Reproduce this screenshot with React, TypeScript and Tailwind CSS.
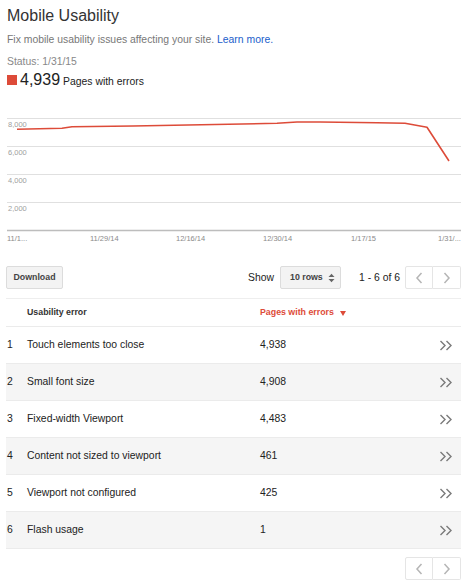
import React from "react";

const rows = [
  { n: 1, name: "Touch elements too close", count: "4,938" },
  { n: 2, name: "Small font size", count: "4,908" },
  { n: 3, name: "Fixed-width Viewport", count: "4,483" },
  { n: 4, name: "Content not sized to viewport", count: "461" },
  { n: 5, name: "Viewport not configured", count: "425" },
  { n: 6, name: "Flash usage", count: "1" },
];

function ChevLeft() {
  return (
    <svg width="8" height="12" viewBox="0 0 8 12">
      <path d="M6.5 1 L2 6 L6.5 11" fill="none" stroke="#b5b5b5" strokeWidth="1.5" />
    </svg>
  );
}
function ChevRight() {
  return (
    <svg width="8" height="12" viewBox="0 0 8 12">
      <path d="M1.5 1 L6 6 L1.5 11" fill="none" stroke="#b5b5b5" strokeWidth="1.5" />
    </svg>
  );
}

function Pager() {
  return (
    <div className="flex h-[23px]">
      <div className="w-[28px] h-full border border-[#e5e5e5] rounded-l-[2px] bg-white flex items-center justify-center">
        <ChevLeft />
      </div>
      <div className="w-[28px] h-full border border-l-0 border-[#e5e5e5] rounded-r-[2px] bg-white flex items-center justify-center">
        <ChevRight />
      </div>
    </div>
  );
}

function DoubleChev() {
  return (
    <svg width="14" height="11" viewBox="0 0 14 11">
      <path d="M1.5 1 L6 5.5 L1.5 10" fill="none" stroke="#7a7a7a" strokeWidth="1.4" />
      <path d="M7.5 1 L12 5.5 L7.5 10" fill="none" stroke="#7a7a7a" strokeWidth="1.4" />
    </svg>
  );
}

function Chart() {
  const pts: [number, number][] = [
    [17, 19.3], [62, 18.3], [72, 16.7], [133, 16], [277, 13.3], [297, 12], [320, 12],
    [377, 12.7], [405, 13.3], [427, 17.3], [449, 51],
  ];
  const d = pts.map((p, i) => (i === 0 ? "M" : "L") + p[0] + " " + p[1]).join(" ");
  const grid = [8, 36, 64, 92];
  const ylabels = ["8,000", "6,000", "4,000", "2,000"];
  const xlabels: [number, string][] = [
    [7, "11/1..."], [90, "11/29/14"], [176, "12/16/14"], [263, "12/30/14"], [351, "1/17/15"], [438, "1/31/..."],
  ];
  return (
    <svg width="471" height="135" viewBox="0 0 471 135" className="block">
      {grid.map((y, i) => (
        <g key={y}>
          <line x1="7" x2="461" y1={y + 0.5} y2={y + 0.5} stroke="#e0e0e0" strokeWidth="1" />
          <text x="8" y={y + 9} fontSize="7.5" fill="#a0a0a0" fontFamily="'Liberation Sans', Arial, sans-serif">
            {ylabels[i]}
          </text>
        </g>
      ))}
      <line x1="7" x2="461" y1="120.5" y2="120.5" stroke="#bdbdbd" strokeWidth="1.5" />
      {xlabels.map(([x, t]) => (
        <text key={t} x={x} y="131" fontSize="7.5" fill="#8a8a8a" fontFamily="'Liberation Sans', Arial, sans-serif">
          {t}
        </text>
      ))}
      <path d={d} fill="none" stroke="#dd4b39" strokeWidth="1.6" strokeLinejoin="round" />
    </svg>
  );
}

export default function App() {
  return (
    <div className="w-[471px] h-[585px] bg-white overflow-hidden font-['Liberation_Sans',Arial,sans-serif] text-[#222]">
      <div className="pl-[7px] pr-[10px]">
        <div className="pt-[6px] text-[16px] leading-[20px] text-[#333]">Mobile Usability</div>
        <div className="mt-[7px] text-[10.4px] leading-[13px] text-[#777]">
          Fix mobile usability issues affecting your site.{" "}
          <span className="text-[#1a5ecb]">Learn more.</span>
        </div>
        <div className="mt-[9px] text-[10.4px] leading-[13px] text-[#888]">Status: 1/31/15</div>
        <div className="mt-[2px] flex items-baseline h-[20px]">
          <div className="w-[10px] h-[10px] bg-[#dd4b39] self-end mb-[5px]" />
          <span className="ml-[3px] text-[16px] leading-[20px] text-[#222]">4,939</span>
          <span className="ml-[3px] text-[10.4px] leading-[13px] text-[#222]">Pages with errors</span>
        </div>
      </div>
      <div className="mt-[20px]">
        <Chart />
      </div>
      <div className="pl-[6px] pr-[10px]">
        <div className="mt-[21px] flex items-center h-[23px]">
          <div className="h-[23px] w-[57px] border border-[#dcdcdc] bg-[#f3f3f3] rounded-[2px] flex items-center justify-center text-[8.8px] font-bold text-[#444]">
            Download
          </div>
          <div className="flex-1" />
          <span className="text-[10.4px] text-[#222]">Show</span>
          <div className="ml-[6px] h-[23px] w-[61px] border border-[#dcdcdc] bg-[#f3f3f3] rounded-[2px] flex items-center justify-between pl-[9px] pr-[5px] text-[8.8px] font-bold text-[#444] whitespace-nowrap">
            <span>10 rows</span>
            <svg width="7" height="10" viewBox="0 0 7 10" className="shrink-0">
              <path d="M0.5 4 L3.5 0.8 L6.5 4 Z" fill="#666" />
              <path d="M0.5 6 L3.5 9.2 L6.5 6 Z" fill="#666" />
            </svg>
          </div>
          <span className="ml-[18px] text-[10.4px] text-[#222] whitespace-nowrap">1 - 6 of 6</span>
          <div className="ml-[5px]">
            <Pager />
          </div>
        </div>
        <div className="mt-[9px] border-t border-[#eeeeee]" />
        <div className="flex items-center h-[28px] border-b border-[#ebebeb] text-[8.8px] font-bold">
          <div className="w-[21px]" />
          <div className="w-[233px] text-[#333]">Usability error</div>
          <div className="text-[#dd4b39] flex items-center">
            Pages with errors
            <svg width="6" height="5" viewBox="0 0 6 5" className="ml-[6px] mt-[2px]">
              <path d="M0 0 L6 0 L3 5 Z" fill="#dd4b39" />
            </svg>
          </div>
        </div>
        {rows.map((r, i) => (
          <div
            key={r.n}
            className={
              "flex items-center h-[37px] border-b border-[#ebebeb] text-[10.4px] text-[#222] " +
              (i % 2 === 1 ? "bg-[#f5f5f5]" : "bg-white")
            }
          >
            <div className="w-[21px] pl-[1px]">{r.n}</div>
            <div className="w-[233px]">{r.name}</div>
            <div className="flex-1">{r.count}</div>
            <div className="pr-[8px] flex items-center">
              <DoubleChev />
            </div>
          </div>
        ))}
        <div className="mt-[8px] flex justify-end">
          <Pager />
        </div>
      </div>
    </div>
  );
}
